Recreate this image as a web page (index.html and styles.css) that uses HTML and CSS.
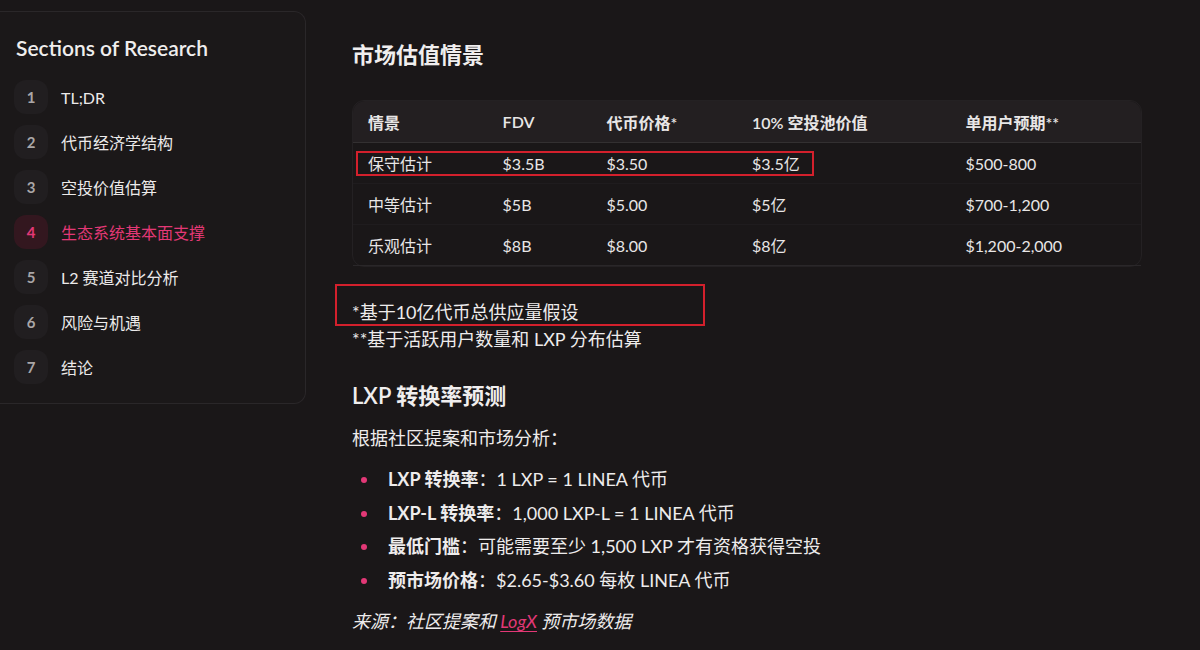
FILE: index.html
```html
<!DOCTYPE html>
<html lang="zh">
<head>
<meta charset="utf-8">
<link rel="stylesheet" href="styles.css">
</head>
<body>
<div class="page">
  <aside class="sidebar">
    <h2 class="side-title">Sections of Research</h2>
    <ul class="toc">
      <li class="toc-item"><span class="num">1</span><span class="label">TL;DR</span></li>
      <li class="toc-item"><span class="num">2</span><span class="label">代币经济学结构</span></li>
      <li class="toc-item"><span class="num">3</span><span class="label">空投价值估算</span></li>
      <li class="toc-item active"><span class="num">4</span><span class="label">生态系统基本面支撑</span></li>
      <li class="toc-item"><span class="num">5</span><span class="label">L2 赛道对比分析</span></li>
      <li class="toc-item"><span class="num">6</span><span class="label">风险与机遇</span></li>
      <li class="toc-item"><span class="num">7</span><span class="label">结论</span></li>
    </ul>
  </aside>
  <main class="content">
    <h3 class="heading">市场估值情景</h3>
    <div class="table-wrap">
      <table class="scen">
        <colgroup>
          <col class="c1"><col class="c2"><col class="c3"><col class="c4"><col class="c5">
        </colgroup>
        <thead>
          <tr><th>情景</th><th>FDV</th><th>代币价格*</th><th>10% 空投池价值</th><th>单用户预期**</th></tr>
        </thead>
        <tbody>
          <tr><td>保守估计</td><td>$3.5B</td><td>$3.50</td><td>$3.5亿</td><td>$500-800</td></tr>
          <tr><td>中等估计</td><td>$5B</td><td>$5.00</td><td>$5亿</td><td>$700-1,200</td></tr>
          <tr><td>乐观估计</td><td>$8B</td><td>$8.00</td><td>$8亿</td><td>$1,200-2,000</td></tr>
        </tbody>
      </table>
      <span class="mark mark-row"></span>
    </div>
    <div class="notes">
      <p class="note">*基于10亿代币总供应量假设</p>
      <p class="note">**基于活跃用户数量和 LXP 分布估算</p>
      <span class="mark mark-note"></span>
    </div>
    <h3 class="heading h-lxp">LXP 转换率预测</h3>
    <p class="para">根据社区提案和市场分析：</p>
    <ul class="bullets">
      <li><b>LXP 转换率</b>：1 LXP = 1 LINEA 代币</li>
      <li><b>LXP-L 转换率</b>：1,000 LXP-L = 1 LINEA 代币</li>
      <li><b>最低门槛</b>：可能需要至少 1,500 LXP 才有资格获得空投</li>
      <li><b>预市场价格</b>：$2.65-$3.60 每枚 LINEA 代币</li>
    </ul>
    <p class="source">来源：社区提案和 <a class="link">LogX</a> 预市场数据</p>
  </main>
</div>
</body>
</html>
```
FILE: styles.css
```css
html, body {
  margin: 0;
  padding: 0;
  background: #1a1718;
  color: #eeecec;
  font-family: Lato, "Noto Sans CJK SC", sans-serif;
  height: 650px;
  overflow: hidden;
}
.page {
  display: flex;
  align-items: flex-start;
  gap: 46px;
}
.sidebar {
  margin-top: 11px;
  width: 306px;
  box-sizing: border-box;
  height: 393px;
  padding: 21px 0 20px 16px;
  border: 1px solid #2a2729;
  border-left: none;
  border-radius: 0 12px 12px 0;
  background: #1b1819;
}
.side-title {
  margin: 0;
  font-size: 21px;
  line-height: 30px;
  font-weight: 600;
  color: #efeded;
}
.toc {
  list-style: none;
  margin: 17px 0 0 -2px;
  padding: 0;
  display: flex;
  flex-direction: column;
  gap: 11px;
}
.toc-item {
  display: flex;
  align-items: center;
  gap: 13px;
  height: 34px;
}
.num {
  width: 34px;
  height: 34px;
  border-radius: 12px;
  background: #211e20;
  display: flex;
  align-items: center;
  justify-content: center;
  font-size: 15px;
  font-weight: 700;
  color: #a9a6a7;
}
.label {
  font-size: 16px;
  color: #eceaea;
}
.toc-item.active .num {
  background: #33171f;
  color: #e33876;
}
.toc-item.active .label {
  color: #e33876;
}
.content {
  padding-top: 41px;
  width: 790px;
}
.heading {
  margin: 0;
  font-size: 22px;
  line-height: 28px;
  font-weight: 600;
  color: #f0eeee;
}
.table-wrap {
  position: relative;
  margin-top: 31px;
  border-radius: 12px;
  border: 1px solid #242123;
}
.scen {
  width: 100%;
  border-collapse: collapse;
  font-size: 16px;
  color: #e8e6e6;
}
.c1 { width: 135px; }
.c2 { width: 104px; }
.c3 { width: 146px; }
.c4 { width: 214px; }
.c5 { width: 191px; }
.scen th {
  text-align: left;
  font-weight: 600;
  height: 41px;
  padding: 0 0 0 15px;
  background: #231f21;
  border-bottom: 1px solid #333031;
}
.scen th:first-child { border-top-left-radius: 12px; }
.scen th:last-child { border-top-right-radius: 12px; }
.scen td {
  height: 40px;
  padding: 0 0 0 15px;
  border-bottom: 1px solid #1f1c1e;
}
.scen tbody tr:last-child td {
  border-bottom: 1px solid #2a2729;
}
.mark {
  position: absolute;
  border: 2px solid #d3202c;
  box-sizing: border-box;
}
.mark-row {
  left: 3px;
  top: 50px;
  width: 458px;
  height: 25px;
}
.notes {
  position: relative;
  margin-top: 32px;
}
.note {
  margin: 0;
  font-size: 18px;
  line-height: 27px;
}
.mark-note {
  left: -17px;
  top: -15px;
  width: 370px;
  height: 42px;
}
.h-lxp {
  margin-top: 29px;
}
.para {
  margin: 15px 0 0;
  font-size: 18px;
  line-height: 27px;
}
.bullets {
  margin: 11px 0 0;
  padding: 0 0 0 36px;
  list-style: none;
}
.bullets li {
  position: relative;
  font-size: 18px;
  line-height: 33.5px;
}
.bullets li::before {
  content: "";
  position: absolute;
  left: -27px;
  top: 14px;
  width: 6px;
  height: 6px;
  border-radius: 50%;
  background: #e33876;
}
.bullets b {
  font-weight: 700;
}
.source {
  margin: 11px 0 0;
  font-size: 18px;
  line-height: 27px;
  font-style: italic;
}
.link {
  color: #e33876;
  text-decoration: underline;
  text-underline-offset: 3px;
}
```
